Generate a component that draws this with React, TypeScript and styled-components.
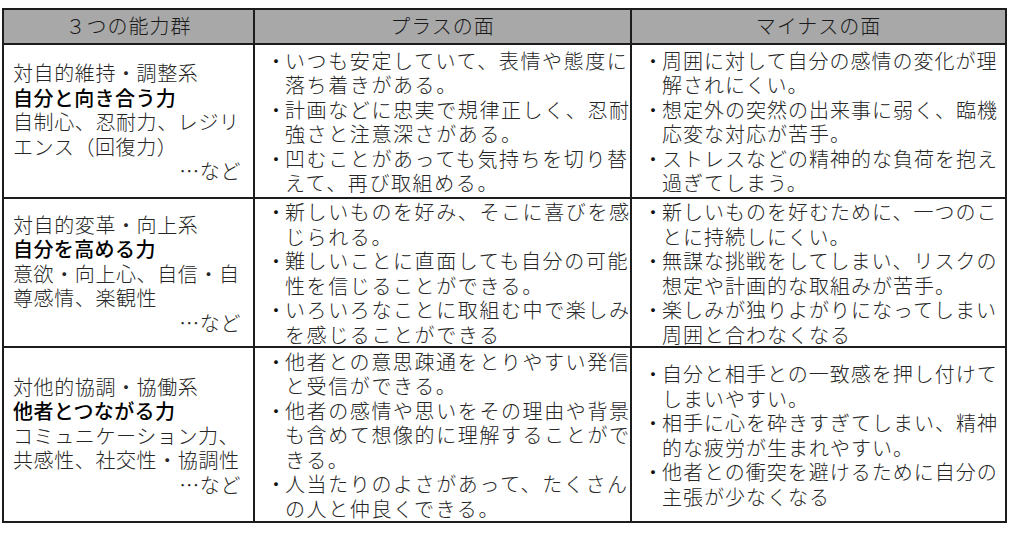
import React from 'react';
import styled, { createGlobalStyle } from 'styled-components';

const Global = createGlobalStyle`
  html, body { margin: 0; padding: 0; background: #ffffff; }
  body { font-family: "Noto Sans CJK JP", "Noto Sans", sans-serif; }
`;

const Page = styled.div`
  padding: 8px 0 0 2px;
`;

const Grid = styled.div`
  display: grid;
  box-sizing: border-box;
  width: 1005px;
  grid-template-columns: 249px 375px 373px;
  grid-template-rows: 33px 152px 147px 173px;
  gap: 2px;
  padding: 2px;
  background: #1c1c1c;
`;

const HeaderCell = styled.div`
  background: #a8a8a8;
  display: flex;
  align-items: center;
  justify-content: center;
  font-size: 20px;
  font-weight: 300;
  color: #1a1a1a;
  letter-spacing: 1px;
  padding-bottom: 2px;
`;

const GroupCell = styled.div`
  background: #ffffff;
  display: flex;
  flex-direction: column;
  justify-content: center;
  padding: 3px 12px 0 9px;
  font-size: 20px;
  line-height: 24.5px;
  letter-spacing: 0.6px;
  color: #262626;
  font-weight: 300;
`;

const Line = styled.span`
  display: block;
  white-space: nowrap;
`;

const Title = styled(Line)`
  font-weight: 500;
  color: #000000;
  letter-spacing: 0.4px;
`;

const Etc = styled(Line)`
  text-align: right;
`;

const ListCell = styled.div<{ $spacing: number }>`
  background: #ffffff;
  display: flex;
  flex-direction: column;
  justify-content: center;
  padding: 2px 0 0 12px;
  font-size: 20px;
  line-height: 24.5px;
  letter-spacing: ${(p) => p.$spacing}px;
  color: #262626;
  font-weight: 300;
`;

const Item = styled.div`
  display: grid;
  grid-template-columns: 18px 1fr;
`;

const Bullet = styled.span`
  display: flex;
  justify-content: center;
  letter-spacing: 0;
  color: #111111;
`;

const ItemText = styled.div``;

type Group = { category: string; title: string; examples: string[] };
type Row = { group: Group; plus: string[][]; minus: string[][] };

const rows: Row[] = [
  {
    group: {
      category: '対自的維持・調整系',
      title: '自分と向き合う力',
      examples: ['自制心、忍耐力、レジリ', 'エンス（回復力）'],
    },
    plus: [
      ['いつも安定していて、表情や態度に', '落ち着きがある。'],
      ['計画などに忠実で規律正しく、忍耐', '強さと注意深さがある。'],
      ['凹むことがあっても気持ちを切り替', 'えて、再び取組める。'],
    ],
    minus: [
      ['周囲に対して自分の感情の変化が理', '解されにくい。'],
      ['想定外の突然の出来事に弱く、臨機', '応変な対応が苦手。'],
      ['ストレスなどの精神的な負荷を抱え', '過ぎてしまう。'],
    ],
  },
  {
    group: {
      category: '対自的変革・向上系',
      title: '自分を高める力',
      examples: ['意欲・向上心、自信・自', '尊感情、楽観性'],
    },
    plus: [
      ['新しいものを好み、そこに喜びを感', 'じられる。'],
      ['難しいことに直面しても自分の可能', '性を信じることができる。'],
      ['いろいろなことに取組む中で楽しみ', 'を感じることができる'],
    ],
    minus: [
      ['新しいものを好むために、一つのこ', 'とに持続しにくい。'],
      ['無謀な挑戦をしてしまい、リスクの', '想定や計画的な取組みが苦手。'],
      ['楽しみが独りよがりになってしまい', '周囲と合わなくなる'],
    ],
  },
  {
    group: {
      category: '対他的協調・協働系',
      title: '他者とつながる力',
      examples: ['コミュニケーション力、', '共感性、社交性・協調性'],
    },
    plus: [
      ['他者との意思疎通をとりやすい発信', 'と受信ができる。'],
      ['他者の感情や思いをその理由や背景', 'も含めて想像的に理解することがで', 'きる。'],
      ['人当たりのよさがあって、たくさん', 'の人と仲良くできる。'],
    ],
    minus: [
      ['自分と相手との一致感を押し付けて', 'しまいやすい。'],
      ['相手に心を砕きすぎてしまい、精神', '的な疲労が生まれやすい。'],
      ['他者との衝突を避けるために自分の', '主張が少なくなる'],
    ],
  },
];

const BulletList: React.FC<{ items: string[][]; spacing: number }> = ({ items, spacing }) => (
  <ListCell $spacing={spacing}>
    {items.map((lines, i) => (
      <Item key={i}>
        <Bullet>・</Bullet>
        <ItemText>
          {lines.map((l, j) => (
            <Line key={j}>{l}</Line>
          ))}
        </ItemText>
      </Item>
    ))}
  </ListCell>
);

export default function App() {
  return (
    <>
      <Global />
      <Page>
        <Grid>
          <HeaderCell>３つの能力群</HeaderCell>
          <HeaderCell>プラスの面</HeaderCell>
          <HeaderCell>マイナスの面</HeaderCell>
          {rows.map((r, i) => (
            <React.Fragment key={i}>
              <GroupCell>
                <Line>{r.group.category}</Line>
                <Title>{r.group.title}</Title>
                {r.group.examples.map((e, j) => (
                  <Line key={j}>{e}</Line>
                ))}
                <Etc>…など</Etc>
              </GroupCell>
              <BulletList items={r.plus} spacing={1.6} />
              <BulletList items={r.minus} spacing={1} />
            </React.Fragment>
          ))}
        </Grid>
      </Page>
    </>
  );
}
